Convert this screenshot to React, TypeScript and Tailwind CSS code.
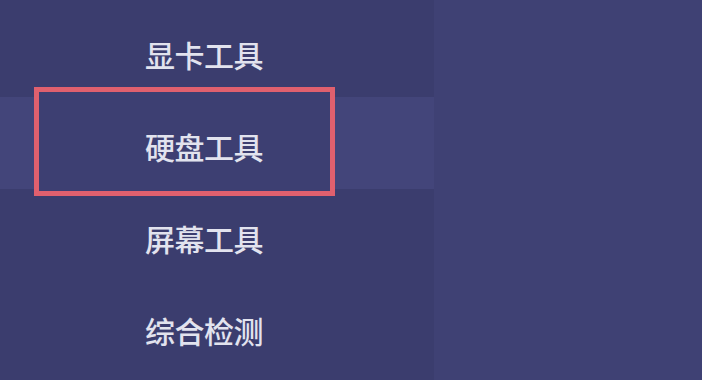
import React from "react";

const items = ["显卡工具", "硬盘工具", "屏幕工具", "综合检测"];

export default function App() {
  return (
    <div
      className="flex h-[380px] w-[702px] overflow-hidden bg-[#3f4174]"
      style={{ fontFamily: '"Noto Sans CJK SC", "Noto Sans", sans-serif' }}
    >
      <div className="flex w-[434px] flex-col bg-[#3b3d6e] pt-[5px]">
        {items.map((t, i) => (
          <div
            key={t}
            className={
              "relative flex h-[92px] items-center pl-[145px] pt-[5px] " +
              (i === 1 ? "bg-[#43457a]" : "")
            }
          >
            {i === 1 && (
              <div className="absolute -top-[10px] -bottom-[7px] left-[34px] w-[301px] border-[5px] border-[#e0606e] bg-[#3d3f72]" />
            )}
            <span className="relative text-[30px] font-medium leading-none tracking-[-0.5px] text-[#e2e3ee]">
              {t}
            </span>
          </div>
        ))}
      </div>
      <div className="flex-1 bg-[#3f4174]" />
    </div>
  );
}
